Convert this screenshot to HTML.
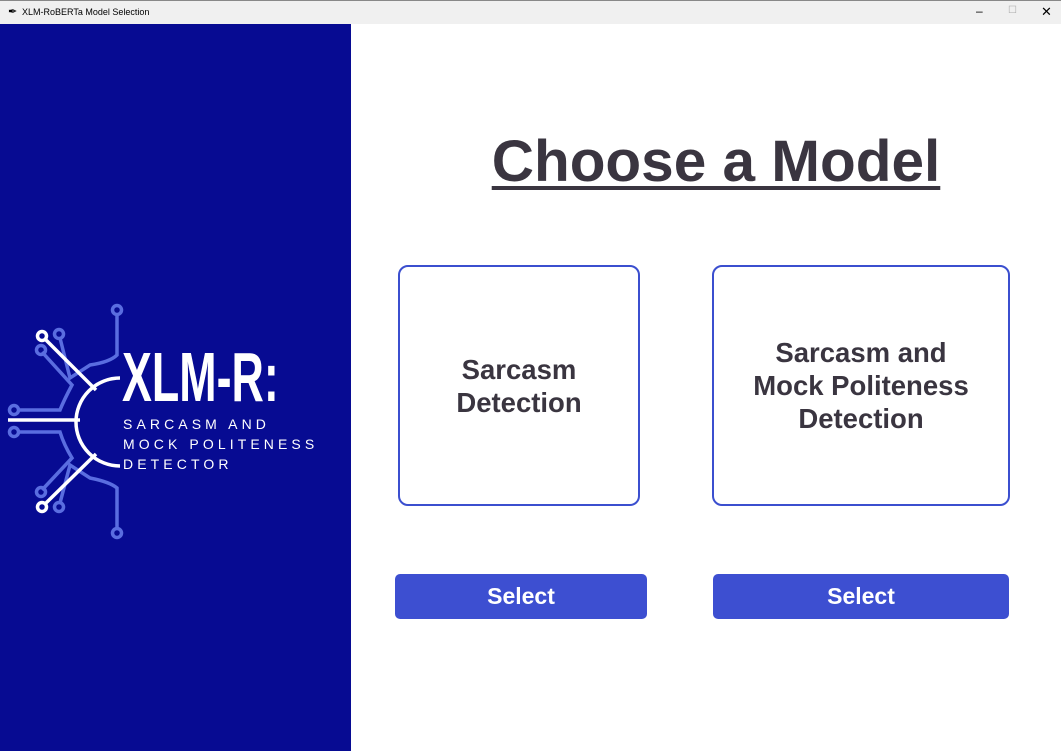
<!DOCTYPE html>
<html><head><style>
*{margin:0;padding:0;box-sizing:border-box}
body{width:1061px;height:751px;overflow:hidden;background:#fff;font-family:"Liberation Sans",sans-serif;position:relative}
.tb{position:absolute;left:0;top:0;width:1061px;height:24px;background:#f0f0f0;border-top:1px solid #888;font-size:9px;color:#000}
.side{position:absolute;left:0;top:24px;width:351px;height:727px;background:#070b92}
.title{position:absolute;left:440px;width:552px;top:128px;text-align:center;font-size:58.5px;font-weight:bold;color:#3a3540;text-decoration:underline;text-decoration-thickness:4px;text-underline-offset:5px}
.card{position:absolute;border:2.5px solid #3b4fcf;border-radius:10px;display:flex;align-items:center;justify-content:center;text-align:center;font-weight:bold;font-size:27.5px;color:#3a3540;line-height:33px}
.btn{position:absolute;background:#3d4fd1;border-radius:5px;color:#fff;font-weight:bold;font-size:23px;display:flex;align-items:center;justify-content:center}
</style></head><body>
<div class="tb"><span style="position:absolute;left:8px;top:4px;font-size:11px">&#10002;</span><span style="position:absolute;left:22px;top:6px">XLM-RoBERTa Model Selection</span>
<span style="position:absolute;left:976px;top:3px;font-size:12px">–</span><span style="position:absolute;left:1008px;top:4px;font-size:10px;color:#aaa">☐</span><span style="position:absolute;left:1041px;top:3px;font-size:13px">✕</span></div>
<div class="side">
<svg width="351" height="727" style="position:absolute;left:0;top:0">
<g transform="translate(0,-24)" fill="none" stroke-width="3.5">
<g stroke="#5a6de0">
<path d="M117 316 V355 Q110 362 90 365 L70 378 L60 338"/><circle cx="117" cy="310" r="4.5"/>
<circle cx="59" cy="334" r="4.5"/>
<path d="M42 352 L72 385 Q64 400 60 410 L18 410"/><circle cx="41" cy="350" r="4.5"/><circle cx="14" cy="410" r="4.5"/>
<path d="M18 432 L60 432 Q64 445 72 458 L42 490"/><circle cx="14" cy="432" r="4.5"/><circle cx="41" cy="492" r="4.5"/>
<path d="M60 503 L70 465 L90 478 Q110 482 117 488 V528"/><circle cx="117" cy="533" r="4.5"/><circle cx="59" cy="507" r="4.5"/>
</g>
<g stroke="#fff">
<path d="M120 378 A44 44 0 0 0 120 466"/>
<path d="M46 340 L96 390"/><circle cx="42" cy="336" r="4.5"/>
<path d="M8 420 L80 420"/>
<path d="M46 503 L96 454"/><circle cx="42" cy="507" r="4.5"/>
</g></g></svg>
<div style="position:absolute;left:122px;top:318px;color:#fff;font-weight:bold;font-size:56px;line-height:56px;transform:scale(0.8,1.25);transform-origin:left top;white-space:nowrap">XLM-R:</div>
<div style="position:absolute;left:123px;top:390px;color:#fff;font-size:14px;line-height:20px;letter-spacing:4.1px">SARCASM AND<br>MOCK POLITENESS<br>DETECTOR</div>
</div>
<div class="title">Choose a Model</div>
<div class="card" style="left:398px;top:265px;width:242px;height:241px">Sarcasm<br>Detection</div>
<div class="card" style="left:712px;top:265px;width:298px;height:241px">Sarcasm and<br>Mock Politeness<br>Detection</div>
<div class="btn" style="left:395px;top:574px;width:252px;height:45px">Select</div>
<div class="btn" style="left:713px;top:574px;width:296px;height:45px">Select</div>
</body></html>
